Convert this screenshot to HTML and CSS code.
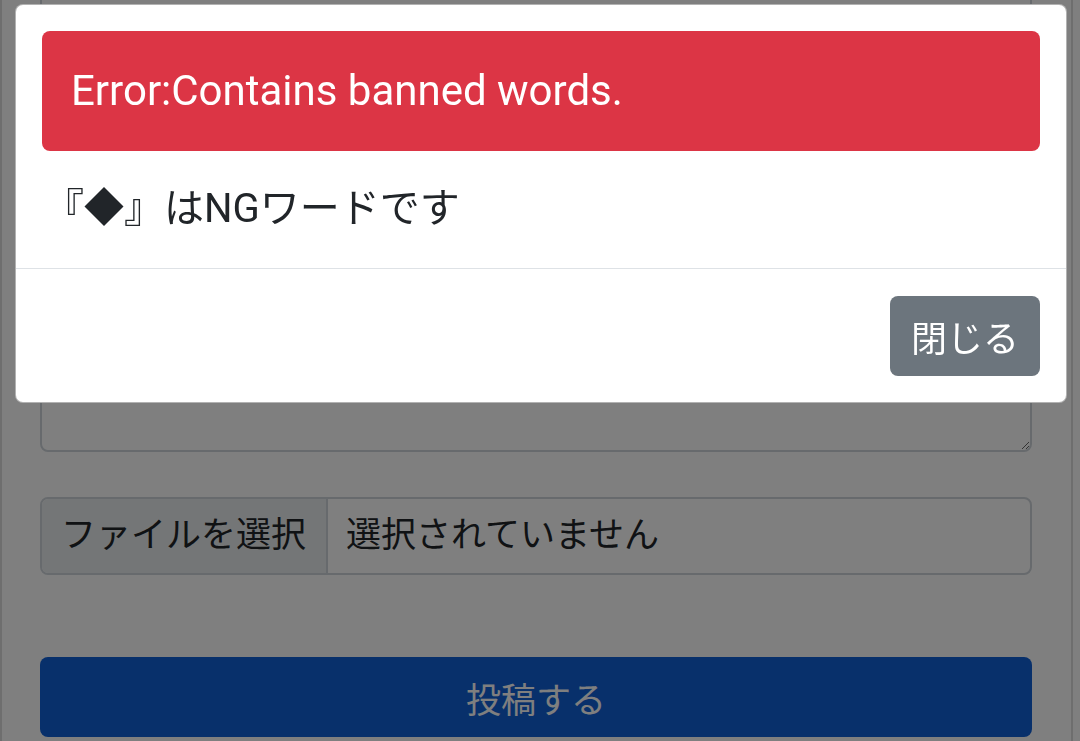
FILE: index.html
```html
<!DOCTYPE html>
<html lang="ja">
<head>
  <meta charset="UTF-8">
  <title>投稿</title>
  <link rel="stylesheet" href="styles.css">
</head>
<body>
  <div class="page">
    <form class="post-form">
      <textarea class="form-control"></textarea>

      <div class="file-input">
        <span class="file-btn">ファイルを選択</span>
        <span class="file-name">選択されていません</span>
      </div>

      <button type="button" class="btn-submit">投稿する</button>
    </form>
  </div>

  <div class="backdrop"></div>

  <div class="modal">
    <div class="modal-header">
      <div class="alert">Error:Contains banned words.</div>
    </div>
    <div class="modal-body">
      <p>『◆』はNGワードです</p>
    </div>
    <div class="modal-footer">
      <button type="button" class="btn-close">閉じる</button>
    </div>
  </div>
</body>
</html>
```

FILE: styles.css
```css
body {
  font-family: Roboto, "Noto Sans CJK JP", sans-serif;
  background-color: #fff;
  color: #212529;
  margin: 0;
  padding: 0;
  overflow: hidden;
}
.page {
  width: 1073px;
  height: 741px;
  border-left: 2px solid #dcdcdc;
  border-right: 2px solid #dcdcdc;
  padding: 0 39px 0 38px;
  box-sizing: border-box;
}
.post-form {
  display: flex;
  flex-direction: column;
}
.form-control {
  margin-top: -30px;
  height: 482px;
  border: 2px solid #ced4da;
  border-radius: 8px;
  box-sizing: border-box;
  font: inherit;
}
.file-input {
  display: flex;
  margin-top: 45px;
  height: 78px;
  border: 2px solid #ced4da;
  border-radius: 8px;
  box-sizing: border-box;
  overflow: hidden;
  font-size: 35px;
  line-height: 74px;
}
.file-btn {
  background-color: #e9ecef;
  border-right: 2px solid #ced4da;
  padding: 0 20px 0 19px;
}
.file-name {
  padding: 0 18px;
}
.btn-submit {
  margin-top: 82px;
  height: 80px;
  border: none;
  border-radius: 8px;
  background-color: #1060d6;
  color: #fff;
  font-family: inherit;
  font-size: 35px;
}
.backdrop {
  position: fixed;
  top: 0;
  left: 0;
  right: 0;
  bottom: 0;
  background-color: rgba(0, 0, 0, 0.5);
}
.modal {
  position: fixed;
  top: 4px;
  left: 15px;
  width: 1052px;
  background-color: #fff;
  border: 1px solid rgba(0, 0, 0, 0.3);
  border-radius: 8px;
  box-sizing: border-box;
  font-size: 40px;
  line-height: 60px;
}
.modal-header {
  padding: 26px 26px 0;
}
.alert {
  background-color: #dc3545;
  color: #fff;
  padding: 30px 29px;
  border-radius: 8px;
  font-size: 42px;
}
.modal-body {
  padding: 28px 28px 29px;
}
.modal-body p {
  margin: 0;
}
.modal-footer {
  display: flex;
  justify-content: flex-end;
  border-top: 1px solid #dee2e6;
  padding: 27px 26px 26px;
}
.btn-close {
  width: 150px;
  height: 80px;
  border: none;
  border-radius: 8px;
  background-color: #6c757d;
  color: #fff;
  font-family: inherit;
  font-size: 36px;
}
```
